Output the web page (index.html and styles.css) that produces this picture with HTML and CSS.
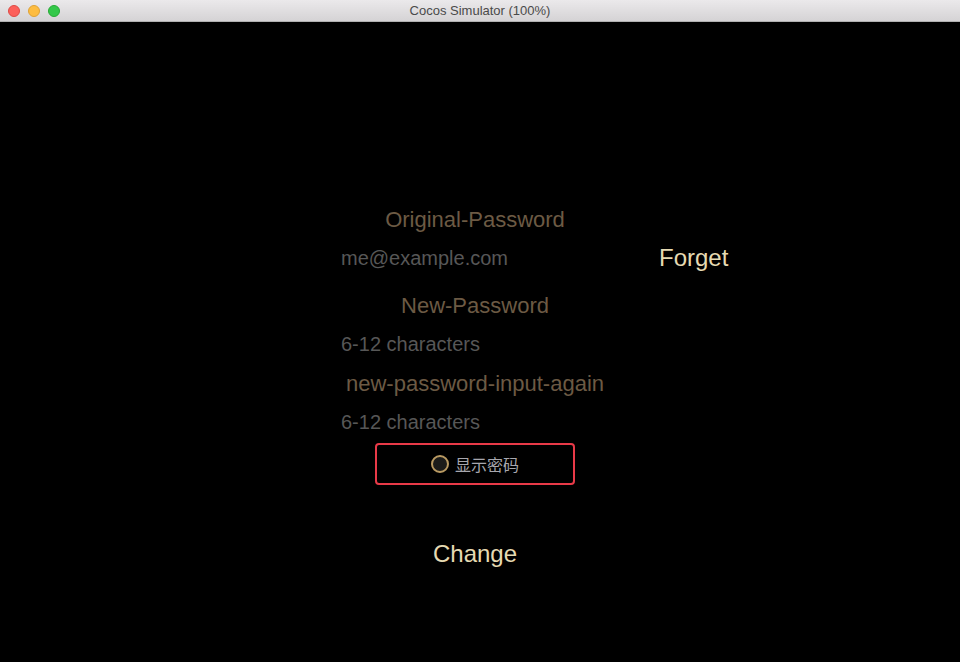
FILE: index.html
```html
<!DOCTYPE html>
<html>
<head>
<meta charset="utf-8">
<link rel="stylesheet" href="styles.css">
</head>
<body>
<div class="window">
  <div class="titlebar">
    <div class="lights">
      <span class="light red"></span>
      <span class="light yellow"></span>
      <span class="light green"></span>
    </div>
    <div class="title">Cocos Simulator (100%)</div>
  </div>
  <div class="stage">
    <div class="form">
      <div class="label first">Original-Password</div>
      <div class="field-row">
        <div class="placeholder email">me@example.com</div>
        <div class="btn forget">Forget</div>
      </div>
      <div class="label second">New-Password</div>
      <div class="placeholder">6-12 characters</div>
      <div class="label third">new-password-input-again</div>
      <div class="placeholder">6-12 characters</div>
      <div class="toggle-box">
        <span class="radio"></span>
        <span class="toggle-text">显示密码</span>
      </div>
      <div class="btn change">Change</div>
    </div>
  </div>
</div>
</body>
</html>
```
FILE: styles.css
```css
html, body {
  margin: 0;
  padding: 0;
  background: #000;
}
.window {
  width: 960px;
  height: 662px;
  display: flex;
  flex-direction: column;
  overflow: hidden;
  font-family: "Liberation Sans", Arial, sans-serif;
}
.titlebar {
  height: 21px;
  flex: 0 0 21px;
  background: linear-gradient(#ebe9eb, #d5d3d5);
  border-bottom: 1px solid #b1b1b1;
  display: flex;
  align-items: center;
  position: relative;
}
.lights {
  display: flex;
  gap: 8px;
  padding-left: 8px;
}
.light {
  width: 12px;
  height: 12px;
  border-radius: 50%;
  box-sizing: border-box;
}
.red { background: #fc605b; border: 1px solid #de4a45; }
.yellow { background: #fdbc40; border: 1px solid #dea236; }
.green { background: #34c84a; border: 1px solid #27aa35; }
.title {
  position: absolute;
  left: 0;
  right: 0;
  top: 0;
  line-height: 21px;
  text-align: center;
  font-size: 13px;
  color: #4a4a4a;
  font-family: "Liberation Sans", Arial, sans-serif;
}
.stage {
  flex: 1;
  background: #000;
  padding-top: 179px;
}
.form {
  margin-left: 341px;
  width: 268px;
  display: flex;
  flex-direction: column;
  align-items: center;
}
.label {
  font-size: 22px;
  line-height: 38px;
  height: 38px;
  color: #6c5a44;
  white-space: nowrap;
}
.label.second { margin-top: 10px; }
.label.third { margin-top: 2px; }
.placeholder {
  align-self: stretch;
  font-size: 20px;
  line-height: 38px;
  height: 38px;
  color: #575757;
  white-space: nowrap;
}
.field-row {
  align-self: stretch;
  display: flex;
  align-items: center;
  width: 420px;
}
.placeholder.email {
  width: 318px;
  flex: 0 0 318px;
}
.btn {
  font-size: 24px;
  color: #e6dab2;
  white-space: nowrap;
}
.forget {
  line-height: 38px;
}
.toggle-box {
  margin-top: 2px;
  width: 196px;
  height: 38px;
  border: 2px solid #e83a48;
  border-radius: 4px;
  display: flex;
  align-items: center;
  justify-content: center;
  gap: 6px;
}
.radio {
  width: 14px;
  height: 14px;
  border-radius: 50%;
  border: 2px solid #b99a62;
  background: #1c1c1a;
}
.toggle-text {
  font-family: "Noto Sans CJK SC", "Liberation Sans", sans-serif;
  font-size: 16px;
  color: #a7a7ae;
  line-height: 20px;
}
.change {
  margin-top: 50px;
  line-height: 38px;
}
```
